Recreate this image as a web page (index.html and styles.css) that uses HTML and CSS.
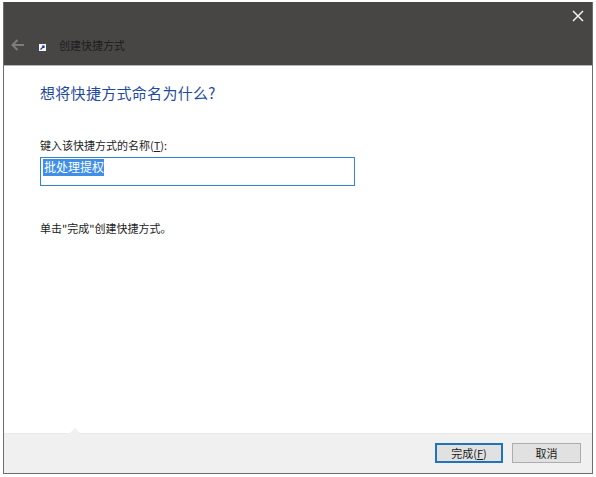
FILE: index.html
```html
<!DOCTYPE html>
<html>
<head>
    <title>创建快捷方式</title>
    <meta http-equiv="content-type" content="text/html; charset=UTF-8"/>
    <link rel="stylesheet" href="styles.css">
</head>
<body>
    <div class="wizard">
        <div class="wizard_head">
            <div class="close_row">
                <svg class="close_icon" width="12" height="12" viewBox="0 0 12 12"><path d="M1 1L11 11M11 1L1 11" stroke="#f2f2f2" stroke-width="1.5" fill="none"/></svg>
            </div>
            <div class="title_row">
                <svg class="back_icon" width="14" height="12" viewBox="0 0 14 12"><path d="M13 6H2M6.500 1L1.500 6L6.500 11" stroke="#7d7c7a" stroke-width="2" fill="none"/></svg>
                <svg class="app_icon" width="7" height="7" viewBox="0 0 7 7"><rect width="7" height="7" fill="#f4f6fa"/><path d="M1.500 5.500L5 2M3 2H5V4" stroke="#1c3f8f" stroke-width="1.200" fill="none"/></svg>
                <span class="title_text">创建快捷方式</span>
            </div>
        </div>
        <div class="wizard_body">
            <h1>想将快捷方式命名为什么?</h1>
            <p class="field_label">键入该快捷方式的名称(<u>T</u>):</p>
            <div class="name_box"><span class="selected">批处理提权</span></div>
            <p class="hint">单击"完成"创建快捷方式。</p>
        </div>
        <div class="wizard_foot">
            <div class="btn btn_default">完成(<u>F</u>)</div>
            <div class="btn">取消</div>
        </div>
    </div>
</body>
</html>
```

FILE: styles.css
```css
html,body{
    margin: 0;
    padding: 0;
    background-color: #fff;
}
body{
    width: 596px;
    height: 477px;
    overflow: hidden;
    font-family: "Noto Sans CJK SC", "Liberation Sans", sans-serif;
    color: #222;
}
.wizard{
    width: 590px;
    height: 472px;
    margin: 2px 0 0 3px;
    box-sizing: border-box;
    border: 1px solid #6e6e6e;
    border-top: 0;
    display: flex;
    flex-direction: column;
}
.wizard_head{
    height: 64px;
    background-color: #474645;
    border-bottom: 1px solid #b5b5b5;
    box-sizing: border-box;
    display: flex;
    flex-direction: column;
    justify-content: space-between;
}
.close_row{
    display: flex;
    justify-content: flex-end;
    padding: 8px 8px 0 0;
}
.title_row{
    display: flex;
    align-items: center;
    height: 20px;
    margin-bottom: 10px;
    padding-left: 7px;
}
.back_icon{
    margin-right: 14px;
}
.app_icon{
    margin: 5px 13px 0 0;
}
.title_text{
    font-size: 11px;
    color: #1d1d1d;
}
.wizard_body{
    flex: 1;
    padding: 0 36px;
}
.wizard_body h1{
    margin: 15px 0 0 0;
    height: 24px;
    line-height: 24px;
    font-size: 15px;
    letter-spacing: 0.3px;
    font-weight: normal;
    color: #1f4b9c;
}
.field_label{
    margin: 32px 0 0 0;
    height: 16px;
    line-height: 16px;
    font-size: 11px;
}
.name_box{
    width: 315px;
    height: 29px;
    margin-top: 4px;
    box-sizing: border-box;
    border: 1px solid #2f86c9;
    padding: 1px 2px;
    line-height: 16px;
    font-size: 12px;
}
.selected{
    display: inline-block;
    height: 17px;
    padding-left: 1px;
    line-height: 16px;
    background-color: #3f8fe8;
    color: #fff;
}
.hint{
    margin: 34px 0 0 0;
    height: 16px;
    line-height: 16px;
    font-size: 11px;
}
.wizard_foot{
    height: 40px;
    background-color: #f0f0f0;
    border-top: 1px solid #e9e9e9;
    box-sizing: border-box;
    display: flex;
    justify-content: flex-end;
    align-items: flex-start;
    gap: 9px;
    padding: 9px 11px 0 0;
    position: relative;
}
.wizard_foot:before{
    content: "";
    position: absolute;
    left: 65px;
    top: -6px;
    border-left: 6px solid transparent;
    border-right: 6px solid transparent;
    border-bottom: 6px solid #f0f0f0;
}
.btn{
    width: 69px;
    height: 20px;
    box-sizing: border-box;
    border: 1px solid #adadad;
    background-color: #e1e1e1;
    font-size: 11px;
    line-height: 18px;
    text-align: center;
    color: #1a1a1a;
}
.btn_default{
    width: 68px;
    border: 2px solid #1f74bb;
    line-height: 16px;
}
```
